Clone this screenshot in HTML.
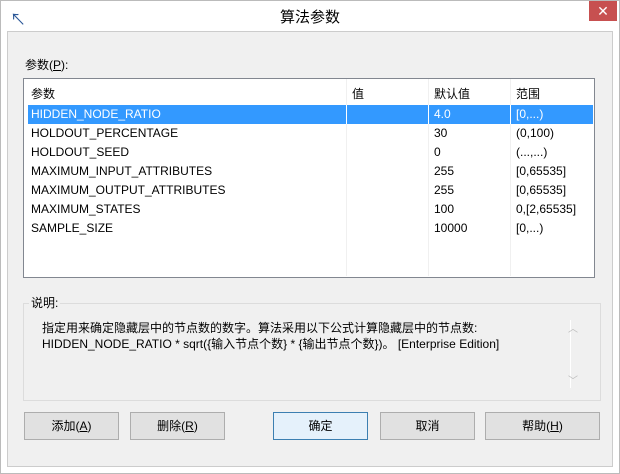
<!DOCTYPE html><html><head><meta charset="utf-8"><style>
body{margin:0;width:620px;height:474px;background:#fff;font-family:"Liberation Sans","Noto Sans CJK SC",sans-serif;font-size:12px;color:#000;position:relative;overflow:hidden}
.a{position:absolute}
.win{left:0;top:0;width:618px;height:472px;border:1px solid #bbb;background:#fff}
.content{left:7px;top:31px;width:604px;height:434px;background:#f0f0f0;border:1px solid #ccc}
.tbl{left:23px;top:78px;width:570px;height:198px;background:#fff;border:1px solid #828790}
.row{position:absolute;left:4px;width:565px;height:19px;line-height:19px}
.row span{position:absolute}
.vl{position:absolute;top:0;width:1px;height:197px;background:#f0f0f0}
.btn{position:absolute;top:412px;height:26px;background:#e1e1e1;border:1px solid #adadad;text-align:center;line-height:26px;font-size:12px}
</style></head><body>
<div class="a win"></div>
<div class="a" style="left:10px;top:6px;font-size:16px;color:#2b5797">↖</div>
<div class="a" style="left:0;width:620px;top:6px;text-align:center;font-size:15px">算法参数</div>
<div class="a" style="left:589px;top:1px;width:28px;height:20px;background:#c75050;color:#fff;text-align:center;line-height:20px;font-size:14px">✕</div>
<div class="a content"></div>
<div class="a" style="left:25px;top:56px">参数(<u>P</u>):</div>
<div class="a tbl">
<div class="vl" style="left:322px"></div><div class="vl" style="left:404px"></div><div class="vl" style="left:486px"></div>
<div class="row" style="top:4px;height:22px;line-height:22px"><span style="left:3px">参数</span><span style="left:324px">值</span><span style="left:406px">默认值</span><span style="left:488px">范围</span></div>
<div class="row" style="top:26px;background:#3399ff;color:#fff"><span style="left:3px">HIDDEN_NODE_RATIO</span><span style="left:318px;width:1px;height:19px;background:#fff"></span><span style="left:400px;width:1px;height:19px;background:#fff"></span><span style="left:482px;width:1px;height:19px;background:#fff"></span><span style="left:406px">4.0</span><span style="left:488px">[0,...)</span></div>
<div class="row" style="top:45px"><span style="left:3px">HOLDOUT_PERCENTAGE</span><span style="left:406px">30</span><span style="left:488px">(0,100)</span></div>
<div class="row" style="top:64px"><span style="left:3px">HOLDOUT_SEED</span><span style="left:406px">0</span><span style="left:488px">(...,...)</span></div>
<div class="row" style="top:83px"><span style="left:3px">MAXIMUM_INPUT_ATTRIBUTES</span><span style="left:406px">255</span><span style="left:488px">[0,65535]</span></div>
<div class="row" style="top:102px"><span style="left:3px">MAXIMUM_OUTPUT_ATTRIBUTES</span><span style="left:406px">255</span><span style="left:488px">[0,65535]</span></div>
<div class="row" style="top:121px"><span style="left:3px">MAXIMUM_STATES</span><span style="left:406px">100</span><span style="left:488px">0,[2,65535]</span></div>
<div class="row" style="top:140px"><span style="left:3px">SAMPLE_SIZE</span><span style="left:406px">10000</span><span style="left:488px">[0,...)</span></div>
</div>
<div class="a" style="left:23px;top:303px;width:576px;height:96px;border:1px solid #dcdcdc"></div>
<div class="a" style="left:29px;top:294px;background:#f0f0f0;padding:0 2px">说明:</div>
<div class="a" style="left:42px;top:320px;line-height:16px">指定用来确定隐藏层中的节点数的数字。算法采用以下公式计算隐藏层中的节点数:<br>HIDDEN_NODE_RATIO * sqrt({输入节点个数} * {输出节点个数})。 [Enterprise Edition]</div>
<div class="a" style="left:570px;top:320px;width:1px;height:68px;background:#fff"></div>
<div class="a" style="left:568px;top:320px;color:#bbb;font-size:10px">︿</div>
<div class="a" style="left:568px;top:372px;color:#bbb;font-size:10px">﹀</div>
<div class="btn" style="left:24px;width:93px">添加(<u>A</u>)</div>
<div class="btn" style="left:130px;width:93px">删除(<u>R</u>)</div>
<div class="btn" style="left:273px;width:93px;border-color:#3c7fb1;background:#e5f1fb">确定</div>
<div class="btn" style="left:380px;width:93px">取消</div>
<div class="btn" style="left:485px;width:113px">帮助(<u>H</u>)</div>
</body></html>
